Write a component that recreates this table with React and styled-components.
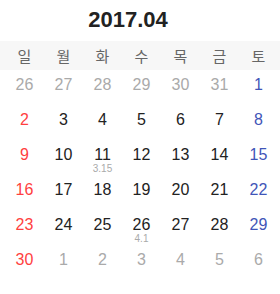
import React from 'react';
import styled, { createGlobalStyle } from 'styled-components';

const GlobalStyle = createGlobalStyle`
  body {
    margin: 0;
    background: #fff;
    font-family: "Liberation Sans", "Noto Sans CJK KR", sans-serif;
  }
`;

const WEEK = ['일', '월', '화', '수', '목', '금', '토'];

// [day, isCurrentMonth, note]
const DAYS = [
  [26, false], [27, false], [28, false], [29, false], [30, false], [31, false], [1, true],
  [2, true], [3, true], [4, true], [5, true], [6, true], [7, true], [8, true],
  [9, true], [10, true], [11, true, '3.15'], [12, true], [13, true], [14, true], [15, true],
  [16, true], [17, true], [18, true], [19, true], [20, true], [21, true], [22, true],
  [23, true], [24, true], [25, true], [26, true, '4.1'], [27, true], [28, true], [29, true],
  [30, true], [1, false], [2, false], [3, false], [4, false], [5, false], [6, false],
];

function toneOf(idx, current) {
  if (!current) return 'other';
  const dow = idx % 7;
  if (dow === 0) return 'sun';
  if (dow === 6) return 'sat';
  return 'normal';
}

const toneColor = {
  other: '#aaaaaa',
  sun: '#ff3f3f',
  sat: '#3f55b8',
  normal: '#222222',
};

export default function App() {
  return (
    <>
      <GlobalStyle />
      <Styled.Calendar>
        <Styled.Title>2017.04</Styled.Title>
        <Styled.WeekBar>
          {WEEK.map(w => (
            <Styled.WeekDay key={w}>{w}</Styled.WeekDay>
          ))}
        </Styled.WeekBar>
        <Styled.Grid>
          {DAYS.map(([day, current, note], idx) => (
            <Styled.Cell key={idx}>
              <Styled.Num $tone={toneOf(idx, current)}>{day}</Styled.Num>
              {note && <Styled.Note>{note}</Styled.Note>}
            </Styled.Cell>
          ))}
        </Styled.Grid>
      </Styled.Calendar>
    </>
  );
}

const Styled = {
  Calendar: styled.div`
    width: 280px;
    height: 294px;
    background: #fff;
  `,
  Title: styled.div`
    display: flex;
    justify-content: center;
    padding: 7px 24px 0 0;
    height: 41px;
    box-sizing: border-box;
    font-size: 22px;
    line-height: 26px;
    font-weight: bold;
    color: #222;
  `,
  WeekBar: styled.div`
    display: grid;
    grid-template-columns: repeat(7, 1fr);
    height: 29px;
    padding: 0 2px 0 5px;
    background: #f7f7f7;
    align-items: center;
  `,
  WeekDay: styled.div`
    text-align: center;
    font-size: 15px;
    color: #666;
    font-family: "Noto Sans CJK KR", sans-serif;
    line-height: 29px;
  `,
  Grid: styled.div`
    display: grid;
    grid-template-columns: repeat(7, 1fr);
    grid-auto-rows: 35px;
    padding: 0 2px 0 5px;
  `,
  Cell: styled.div`
    display: flex;
    flex-direction: column;
    align-items: center;
    padding-top: 7px;
  `,
  Num: styled.span`
    font-size: 16px;
    line-height: 16px;
    color: ${p => toneColor[p.$tone]};
  `,
  Note: styled.span`
    margin-top: 1px;
    font-size: 10px;
    line-height: 10px;
    color: #aaa;
  `,
};
